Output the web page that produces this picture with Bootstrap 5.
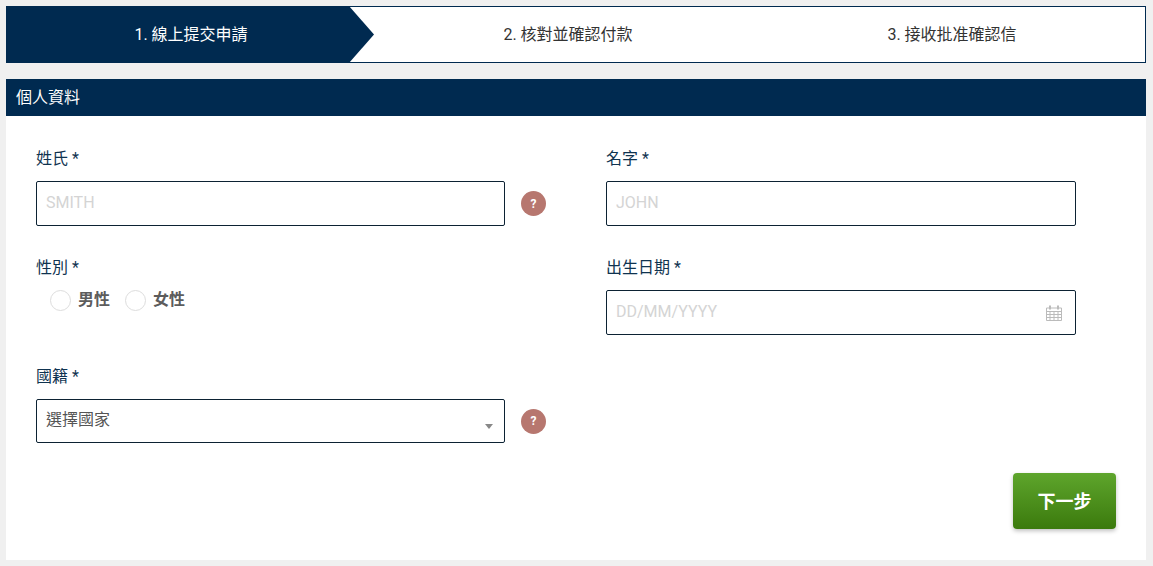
<!DOCTYPE html>
<html lang="zh-Hant">
<head>
<meta charset="utf-8">
<title>個人資料</title>
<link rel="stylesheet" href="https://cdn.jsdelivr.net/npm/bootstrap@5.3.0/dist/css/bootstrap.min.css">
<style>
html,body{height:100%;}
body{background:#f0f0f0;font-family:Roboto,"Noto Sans CJK TC",sans-serif;color:#002a50;overflow:hidden;}
.page-wrap{padding:6px 7px 6px 6px;height:566px;}
.stepper{height:57px;background:#fff;border:1px solid #002a50;margin-bottom:16px;font-size:16px;color:#333;}
.step-one{width:368px;margin:-1px 0 -1px -1px;padding-left:2px;background:#002a50;color:#fff;clip-path:polygon(0 0,343px 0,368px 50%,343px 100%,0 100%);}
.step-two{width:388px;}
.step-three{width:380px;}
.sec-head{height:37px;background:#002a50;color:#fff;font-size:16px;padding-left:10px;padding-top:1px;}
.form-body{background:#fff;height:444px;padding:30px 30px 0;}
.form-left{width:570px;}
.form-right{width:470px;}
.form-cell{height:109px;}
.cell-label{font-size:16px;line-height:24px;padding-top:1px;margin-bottom:10px;color:#0f3350;}
.cell-label-tight{margin-bottom:8px;}
.txt-box{width:469px;height:45px;border:1px solid #0c2233;border-radius:2px;padding:0 9px 3px;font-size:16px;color:#555;background:#fff;}
.right-box{width:470px;}
.select-box{height:44px;padding-bottom:2px;}
.txt-box::placeholder{color:#d4d4d4;opacity:1;}
.help-dot{width:25px;height:25px;border-radius:50%;background:#b7776f;color:#fff;font-size:12px;font-weight:700;margin-left:16px;}
.radio-ring{width:21px;height:21px;border:1px solid #ddd;border-radius:50%;background:#fff;margin-right:7px;}
.radio-set{padding-left:14px;font-size:16px;font-weight:700;color:#5c5c5c;gap:15px;}
.caret-down{width:0;height:0;border-left:4px solid transparent;border-right:4px solid transparent;border-top:5px solid #888;}
.cal-icon{width:16px;height:16px;color:#bbb;}
.next-btn{width:103px;height:56px;background:linear-gradient(#5ea52c,#3b7a0d);border:0;border-radius:4px;color:#fff;font-size:18px;font-weight:700;box-shadow:0 2px 4px rgba(0,0,0,.25);}
.field-wrap{position:relative;}
.field-wrap .over-right{position:absolute;right:14px;top:50%;transform:translateY(-50%);}
.field-wrap .caret-down{right:12px;top:25px;transform:none;}
</style>
</head>
<body>
<div class="page-wrap">
  <div class="stepper d-flex">
    <div class="step-one d-flex align-items-center justify-content-center">1. 線上提交申請</div>
    <div class="step-two d-flex align-items-center justify-content-center">2. 核對並確認付款</div>
    <div class="step-three d-flex align-items-center justify-content-center">3. 接收批准確認信</div>
  </div>
  <div class="sec-head d-flex align-items-center">個人資料</div>
  <div class="form-body">
    <div class="d-flex">
      <div class="form-left">
        <div class="form-cell">
          <div class="cell-label">姓氏 *</div>
          <div class="d-flex align-items-center">
            <input class="txt-box" type="text" placeholder="SMITH">
            <span class="help-dot d-flex align-items-center justify-content-center">?</span>
          </div>
        </div>
        <div class="form-cell">
          <div class="cell-label cell-label-tight">性別 *</div>
          <div class="radio-set d-flex align-items-center">
            <span class="d-flex align-items-center"><span class="radio-ring"></span>男性</span>
            <span class="d-flex align-items-center"><span class="radio-ring"></span>女性</span>
          </div>
        </div>
        <div class="form-cell">
          <div class="cell-label">國籍 *</div>
          <div class="d-flex align-items-center">
            <div class="field-wrap">
              <div class="txt-box select-box d-flex align-items-center">選擇國家</div>
              <span class="caret-down over-right"></span>
            </div>
            <span class="help-dot d-flex align-items-center justify-content-center">?</span>
          </div>
        </div>
      </div>
      <div class="form-right">
        <div class="form-cell">
          <div class="cell-label">名字 *</div>
          <input class="txt-box right-box" type="text" placeholder="JOHN">
        </div>
        <div class="form-cell">
          <div class="cell-label">出生日期 *</div>
          <div class="field-wrap">
            <input class="txt-box right-box" type="text" placeholder="DD/MM/YYYY">
            <svg class="cal-icon over-right" viewBox="0 0 16 16" fill="none" stroke="currentColor" stroke-width="1">
              <path d="M.5 3h15v12.500H.5zM.5 6.500h15M.5 9.500h15M.5 12.500h15M4 6.500v9M8 6.500v9M12 6.500v9"/>
              <path d="M4 .5v4M12 .5v4" stroke-width="2"/>
            </svg>
          </div>
        </div>
      </div>
    </div>
    <div class="d-flex justify-content-end">
      <button class="next-btn" type="button">下一步</button>
    </div>
  </div>
</div>
<script src="https://cdn.jsdelivr.net/npm/bootstrap@5.3.0/dist/js/bootstrap.bundle.min.js"></script>
</body>
</html>
